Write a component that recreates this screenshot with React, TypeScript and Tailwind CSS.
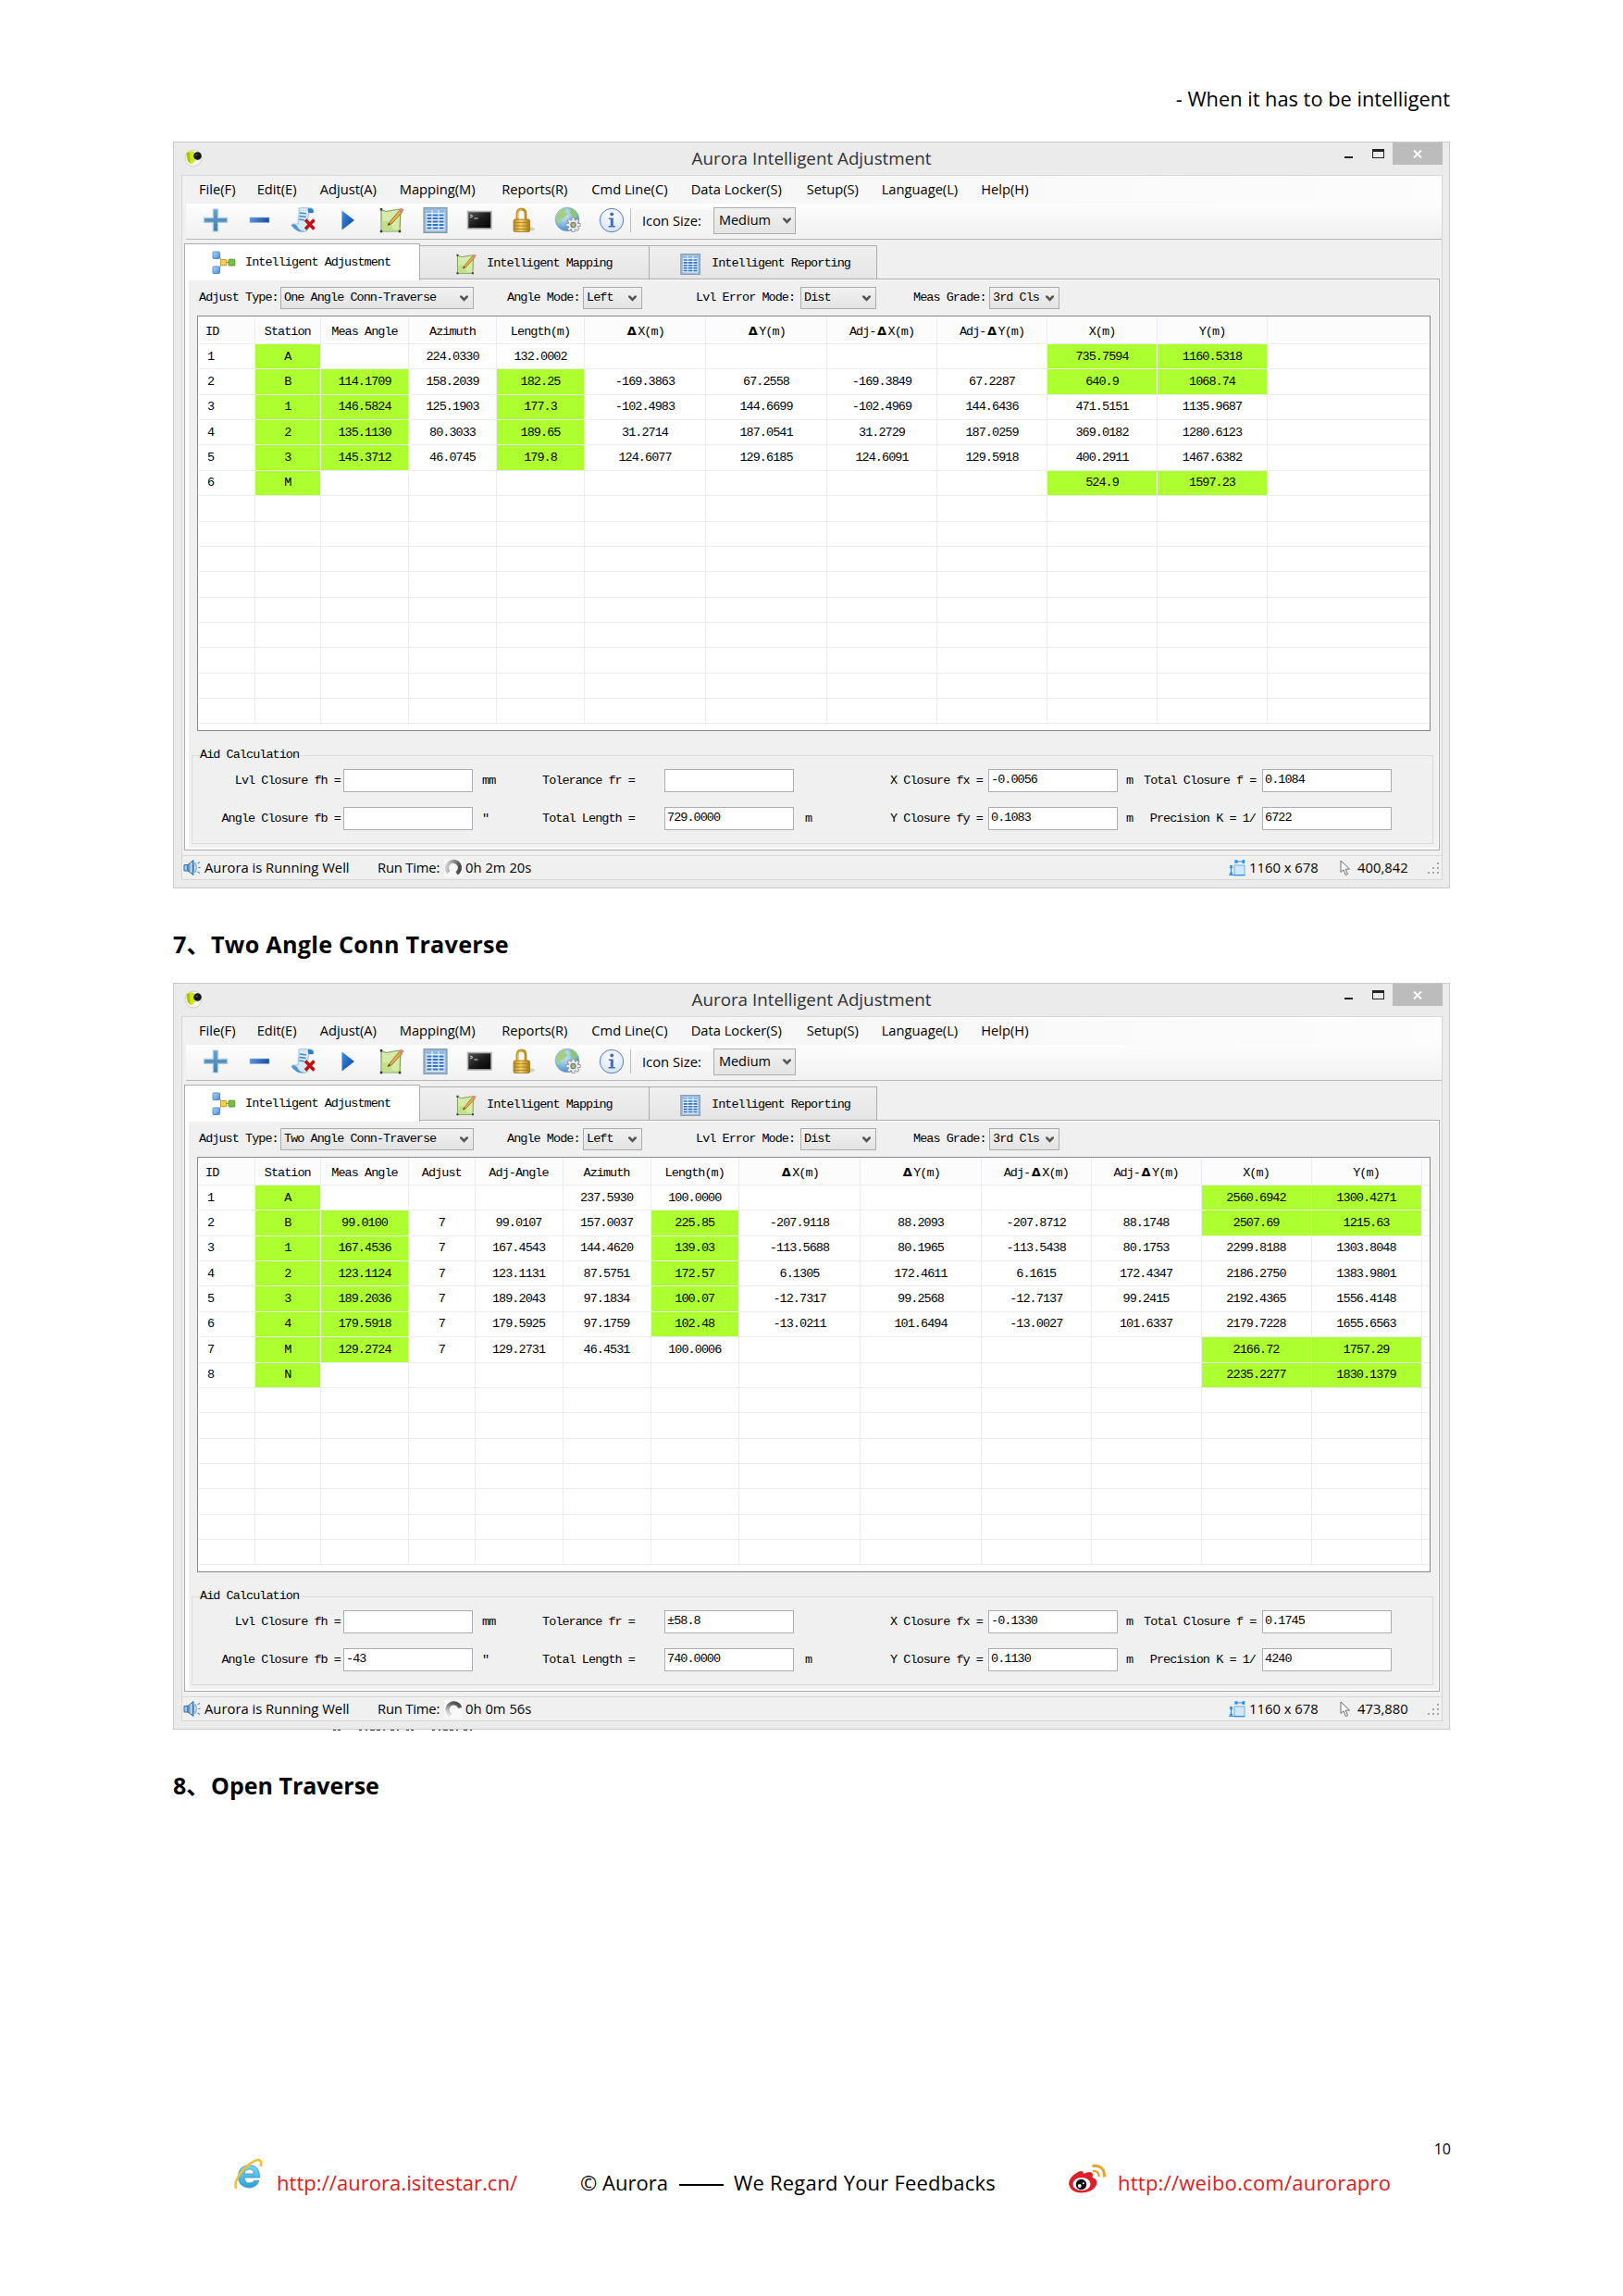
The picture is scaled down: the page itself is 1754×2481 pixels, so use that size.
import type { ReactNode } from "react";

const SANS = "font-['Open_Sans','Noto_Sans_CJK_SC',sans-serif]";
const MONO = "font-['Liberation_Mono',monospace] text-[13.500px] tracking-[-0.960px] whitespace-pre";

/* ---------- icons ---------- */

function Defs() {
  return (
    <svg width="0" height="0" className="absolute">
      <defs>
        <linearGradient id="plusG" x1="0" y1="0" x2="0" y2="1">
          <stop offset="0" stopColor="#6fa3c9" />
          <stop offset="1" stopColor="#3f7db0" />
        </linearGradient>
        <linearGradient id="minusG" x1="0" y1="0" x2="1" y2="0">
          <stop offset="0" stopColor="#5b90d8" />
          <stop offset="1" stopColor="#1d4c9e" />
        </linearGradient>
        <linearGradient id="playG" x1="0" y1="0" x2="1" y2="1">
          <stop offset="0" stopColor="#3f8ee6" />
          <stop offset="1" stopColor="#0a3f9a" />
        </linearGradient>
        <linearGradient id="goldG" x1="0" y1="0" x2="1" y2="0">
          <stop offset="0" stopColor="#b98a1c" />
          <stop offset="0.45" stopColor="#f3d265" />
          <stop offset="1" stopColor="#a87812" />
        </linearGradient>
        <radialGradient id="globeG" cx="0.35" cy="0.3" r="0.8">
          <stop offset="0" stopColor="#d7eefb" />
          <stop offset="0.55" stopColor="#7fb8e2" />
          <stop offset="1" stopColor="#3b7fbb" />
        </radialGradient>
        <radialGradient id="infoG" cx="0.5" cy="0.3" r="0.7">
          <stop offset="0" stopColor="#ffffff" />
          <stop offset="1" stopColor="#d5e4fa" />
        </radialGradient>
        <linearGradient id="blueNode" x1="0" y1="0" x2="1" y2="1">
          <stop offset="0" stopColor="#b9dcfb" />
          <stop offset="1" stopColor="#3f86d8" />
        </linearGradient>
        <linearGradient id="ieG" x1="0" y1="0" x2="0" y2="1">
          <stop offset="0" stopColor="#7fd6f7" />
          <stop offset="1" stopColor="#2b9fd9" />
        </linearGradient>
        <linearGradient id="termG" x1="0" y1="0" x2="1" y2="1">
          <stop offset="0" stopColor="#5a5a5a" />
          <stop offset="0.5" stopColor="#1c1c1c" />
          <stop offset="1" stopColor="#000000" />
        </linearGradient>
        <linearGradient id="spinRight" x1="0" y1="0.3" x2="1" y2="0.5">
          <stop offset="0" stopColor="#cfcfcf" />
          <stop offset="1" stopColor="#4a4a4a" />
        </linearGradient>
        <linearGradient id="spinTop" x1="0.8" y1="0" x2="0.2" y2="1">
          <stop offset="0" stopColor="#4a4a4a" />
          <stop offset="0.4" stopColor="#7d7d7d" />
          <stop offset="1" stopColor="#e4e4e4" />
        </linearGradient>
      </defs>
    </svg>
  );
}

function AppIcon() {
  return (
    <svg width="20" height="20" viewBox="0 0 20 20">
      <circle cx="10" cy="10" r="9" fill="#f4f4ee" stroke="#c9c9c0" strokeWidth="0.8" />
      <path d="M2.500 4 Q6 1 11 3 L11 9 Q13 10 12 13 Q10 16.500 6.500 16 Q2 13 2.500 4Z" fill="#cfe61e" />
      <path d="M2.500 4 L6 4 L6.500 15 L4 13Z" fill="#a7c413" />
      <circle cx="14.500" cy="7.500" r="4.300" fill="#161616" />
      <circle cx="13.500" cy="6.500" r="1.100" fill="#5c5c5c" />
      <circle cx="12" cy="14.500" r="1.700" fill="#ffffff" />
    </svg>
  );
}

function PlusIcon() {
  return (
    <svg width="28" height="28" viewBox="0 0 28 28">
      <path d="M11.300 2h5.200v9.300h10v5h-10v9.700h-5.200v-9.700H1.500v-5h9.800z" fill="url(#plusG)" stroke="#a9cfe8" strokeWidth="1.200" />
    </svg>
  );
}

function MinusIcon() {
  return (
    <svg width="28" height="28" viewBox="0 0 28 28">
      <rect x="4" y="11" width="21" height="5.500" fill="url(#minusG)" stroke="#8fb4e6" strokeWidth="0.600" />
    </svg>
  );
}

function ScrollDeleteIcon() {
  return (
    <svg width="30" height="30" viewBox="0 0 30 30">
      <path d="M10 2 Q12 1 24 2 Q27 3 25 7 L21 7 Q19 12 20 19 Q22 24 18 27 Q8 28 2 21 Q2 18 6 19 L9 19 Q9 14 10 8Z" fill="#d5e8f8" stroke="#8db6da" strokeWidth="0.800" />
      <path d="M20 2 Q27 2 25.500 7 L20.500 7 Q19 4 20 2Z" fill="#2f7fc4" />
      <path d="M11 7l7 .8M10.500 10.500l7 1M10.300 14l5.500 .8" stroke="#3f86c6" strokeWidth="1.300" />
      <path d="M2 20 Q5 18 8 21 Q10 26 16 27.500 Q7 28.500 2 20Z" fill="#4f97d3" />
      <path d="M17 14.500 L26.500 24.500 M26.500 14.500 L17 24.500" stroke="#c40d12" strokeWidth="3.400" />
    </svg>
  );
}

function PlayIcon() {
  return (
    <svg width="28" height="28" viewBox="0 0 28 28">
      <path d="M7.500 3.500 L21 14 L7.500 24.500Z" fill="url(#playG)" />
    </svg>
  );
}

function MapIcon({ size }: { size: number }) {
  return (
    <svg width={size} height={size} viewBox="0 0 28 28">
      <path d="M3 2.500 L8 4.500 L20 2.500 L24 2 L23 26 L3 26Z" fill="#d6eba9" stroke="#7f9c5a" strokeWidth="1.200" />
      <path d="M3.500 16 Q11 12 14 20 T23 22 L23 25.500 L3.500 25.500Z" fill="#c2e08c" />
      <path d="M10 19.500 L12 16 L22.500 3.500 L25.500 5.500 L14 18Z" fill="#e0b04c" stroke="#9a6a2c" strokeWidth="0.900" />
      <path d="M22.500 3.500 L25 0.800 L27.800 2.500 L25.500 5.500Z" fill="#d98a86" />
      <path d="M10 19.500 L11.500 16.800 L13 18.300Z" fill="#4a3520" />
      <path d="M1.800 1h2.400v2.400h-2.400zM1.800 24.800h2.400v2.400h-2.400zM21.800 24.800h2.400v2.400h-2.400z" fill="#2d3b22" />
    </svg>
  );
}

function TableIcon({ size }: { size: number }) {
  return (
    <svg width={size} height={size} viewBox="0 0 28 28">
      <rect x="1" y="0.600" width="25" height="27" fill="#9fb9d0" stroke="#7690a8" strokeWidth="1" />
      <rect x="3.500" y="3" width="20" height="22" fill="#e2f0ff" />
      <rect x="3.500" y="3" width="20" height="3" fill="#8bb9ec" />
      <path d="M4.500 8.500h18M4.500 12h18M4.500 15.500h18M4.500 19h18M4.500 22.500h18" stroke="#2f6fc4" strokeWidth="1.900" />
      <path d="M10 3v22M17 3v22" stroke="#eaf4ff" strokeWidth="1.200" />
    </svg>
  );
}

function TerminalIcon() {
  return (
    <svg width="28" height="28" viewBox="0 0 28 28">
      <rect x="1.500" y="4.500" width="25.500" height="18.500" fill="url(#termG)" stroke="#b4b4b4" strokeWidth="1.600" />
      <path d="M4 8l3 1.500l-3 1.500M8.500 12h4" stroke="#dddddd" strokeWidth="1" fill="none" />
    </svg>
  );
}

function LockIcon() {
  return (
    <svg width="28" height="28" viewBox="0 0 28 28">
      <ellipse cx="19" cy="23.500" rx="7" ry="2.500" fill="#d4d0c8" />
      <path d="M7 14 V7 Q7 2 11.500 2 Q16 2 16 7 V14" fill="none" stroke="#c09024" strokeWidth="2.800" />
      <path d="M7.500 13 V7 Q7.500 2.500 11.500 2.500" fill="none" stroke="#eed37a" strokeWidth="0.800" />
      <rect x="3" y="13" width="17.500" height="13.500" rx="1.500" fill="url(#goldG)" stroke="#9a6f14" strokeWidth="0.700" />
      <path d="M3.500 16.500h16.500M3.500 20h16.500M3.500 23.500h16.500" stroke="#a87a1a" strokeWidth="0.800" />
    </svg>
  );
}

function GlobeIcon() {
  const teeth = [0, 45, 90, 135];
  return (
    <svg width="30" height="30" viewBox="0 0 30 30">
      <circle cx="14" cy="14" r="12.800" fill="url(#globeG)" stroke="#7aa6c8" strokeWidth="0.700" />
      <path d="M3 9 Q7 2 13 2 L12 6 L15 8 L10 13 L6 14 L7 18 L3 18 Q1 13 3 9Z" fill="#a2cf83" />
      <path d="M17 2 Q24 4 26 10 L22 13 L18 9Z" fill="#8fc672" />
      <g stroke="#8b8b8b" strokeWidth="4">
        {teeth.map((a) => (
          <path key={a} d="M12.500 20 H28.500" transform={`rotate(${a} 20.500 20)`} />
        ))}
      </g>
      <g stroke="#ededed" strokeWidth="2.400">
        {teeth.map((a) => (
          <path key={a} d="M13.200 20 H27.800" transform={`rotate(${a} 20.500 20)`} />
        ))}
      </g>
      <circle cx="20.500" cy="20" r="5" fill="#ededed" />
      <circle cx="20.500" cy="20" r="2.600" fill="#9cc08a" stroke="#7c7c7c" strokeWidth="1.200" />
    </svg>
  );
}

function InfoIcon() {
  return (
    <svg width="28" height="28" viewBox="0 0 28 28">
      <circle cx="14" cy="14" r="12.700" fill="url(#infoG)" stroke="#5d7fbf" strokeWidth="1" />
      <circle cx="14.200" cy="7.500" r="2" fill="#4a6cb8" />
      <path d="M10.800 11.500h5v8.500h2v1.600h-7.200V20h2.200v-6.900h-2z" fill="#4a6cb8" />
    </svg>
  );
}

function NodesIcon() {
  return (
    <svg width="26" height="26" viewBox="0 0 26 26">
      <path d="M7 5 L12 12.500 L7 20M11 12.500h8" stroke="#8a8a8a" strokeWidth="1" fill="none" />
      <rect x="1" y="1" width="7.500" height="7.500" rx="1" fill="url(#blueNode)" stroke="#4a83bd" strokeWidth="0.900" />
      <rect x="1" y="17" width="7.500" height="7.500" rx="1" fill="url(#blueNode)" stroke="#4a83bd" strokeWidth="0.900" />
      <rect x="9.500" y="9.500" width="6.200" height="6.200" rx="0.800" fill="#f5d24a" stroke="#b58f1c" strokeWidth="0.900" />
      <rect x="18" y="9.200" width="6.800" height="6.800" rx="0.800" fill="#7cc242" stroke="#4f8a24" strokeWidth="0.900" />
    </svg>
  );
}

function SpeakerIcon() {
  return (
    <svg width="19" height="19" viewBox="0 0 19 19">
      <path d="M1 6.500h4v6.500H1z" fill="#9cc6ee" stroke="#2f6db0" strokeWidth="1" />
      <path d="M5 6.500 L11 1.500 V17.500 L5 13Z" fill="#6ba7e2" stroke="#2f6db0" strokeWidth="1" />
      <path d="M8.500 4v11" stroke="#d8ebfb" strokeWidth="1.200" />
      <ellipse cx="12.800" cy="9.500" rx="1.300" ry="5" fill="none" stroke="#4d8fd0" strokeWidth="1" />
      <path d="M15.500 5l2.500-1.500M16 9.500h2.500M15.500 14l2.500 1.500" stroke="#4d8fd0" strokeWidth="1.100" />
    </svg>
  );
}

function SpinnerIcon({ turned }: { turned: boolean }) {
  return (
    <svg width="20" height="20" viewBox="0 0 20 20" className="bg-[#f8f8f8]">
      {turned ? (
        <path d="M7 16.500 A7 7 0 1 1 17.200 8.500" fill="none" stroke="url(#spinTop)" strokeWidth="4.200" />
      ) : (
        <path d="M4.800 14.500 A7 7 0 1 1 13.500 15.800" fill="none" stroke="url(#spinRight)" strokeWidth="4.200" />
      )}
    </svg>
  );
}

function ResizeIcon() {
  return (
    <svg width="18" height="19" viewBox="0 0 18 19">
      <rect x="6" y="7" width="11" height="11" fill="#d3e9fb" stroke="#63aee8" strokeWidth="1" />
      <path d="M0 17.500h17M7 1v4M16.500 1v4M7.500 3h9M9.500 1.500L7.500 3l2 1.500M14.500 1.500l2 1.500l-2 1.500M1 7.500h3M2.500 8v9M1 10l1.500-2L4 10M1 15l1.500 2L4 15" stroke="#2a8de0" strokeWidth="1.200" fill="none" />
    </svg>
  );
}

function CursorIcon() {
  return (
    <svg width="12" height="18" viewBox="0 0 12 18">
      <path d="M1 1 V13.500 L4 10.800 L6.300 16.500 L8.500 15.600 L6.200 10.200 L10.500 10Z" fill="#ffffff" stroke="#6b6b6b" strokeWidth="1" />
    </svg>
  );
}

function Grip() {
  return (
    <svg width="14" height="14" viewBox="0 0 14 14" fill="#a6a6a6">
      <path d="M11 1h2v2h-2zM11 6h2v2h-2zM6 6h2v2h-2zM11 11h2v2h-2zM6 11h2v2h-2zM1 11h2v2h-2z" />
    </svg>
  );
}

function Chevron() {
  return (
    <svg width="9" height="7" viewBox="0 0 9 7" className="shrink-0">
      <path d="M0 0.500 H2.200 L4.500 3 L6.800 0.500 H9 V2 L4.500 6.800 L0 2Z" fill="#555555" />
    </svg>
  );
}

/* ---------- window ---------- */

type Row = string[];

type WindowData = {
  adjustType: string;
  cols: string;
  headers: string[];
  rows: Row[];
  green: Record<number, number[]>;
  values: [string, string, string, string, string, string, string, string];
  time: string;
  pointer: string;
  turned: boolean;
};

const COMBO = "flex items-center justify-between border border-[#acacac] bg-linear-to-b from-[#f1f1f1] to-[#e4e4e4]";

function Combo({ width, children }: { width: string; children: string }) {
  return (
    <div className={`${COMBO} ${MONO} ${width} h-6 pr-[5px] pl-[3px]`}>
      <span>{children}</span>
      <Chevron />
    </div>
  );
}

function Tab({ icon, label, className }: { icon: ReactNode; label: string; className: string }) {
  return (
    <div className={`flex items-center border border-[#acacac] ${className}`}>
      {icon}
      <span className={MONO}>{label}</span>
    </div>
  );
}

function DataTable({ data }: { data: WindowData }) {
  const count = data.headers.length;
  return (
    <div className={`${MONO} ml-[9px] h-[449px] w-[1333px] overflow-hidden border-[1.5px] border-[#828790] bg-white pl-px`}>
      <div className={`grid h-[30px] border-b border-[#ececec] bg-[#fcfcfd] ${data.cols}`}>
        {data.headers.map((h, i) => (
          <div key={h} className={`flex items-center border-r border-[#e9eef5] pt-[5px] ${i === 0 ? "pl-[7px]" : "justify-center"}`}>
            {h.includes("Δ") ? (
              <span>
                {h.split("Δ")[0]}
                <span className="inline-block w-[13px] text-center font-['DejaVu_Sans'] text-[13px] leading-none font-bold tracking-normal">Δ</span>
                {h.split("Δ")[1]}
              </span>
            ) : (
              <span>{h}</span>
            )}
          </div>
        ))}
      </div>
      {Array.from({ length: 15 }, (_, r) => (
        <div key={r} className={`grid h-[27.370px] border-b border-[#ececec] ${data.cols}`}>
          {Array.from({ length: count }, (_, c) => (
            <div
              key={c}
              className={`flex items-center border-r border-[#ececec] pt-px ${c === 0 ? "pl-[9px]" : "justify-center"} ${
                data.green[r]?.includes(c) ? "bg-[#adff2f]" : ""
              }`}
            >
              {data.rows[r]?.[c] ?? ""}
            </div>
          ))}
        </div>
      ))}
    </div>
  );
}

function Field({ value }: { value: string }) {
  return <div className="flex h-[25px] w-[140px] items-center border border-[#abadb3] bg-white pb-px pl-[2px]">{value}</div>;
}

function AidRow({ labels, units, values, className }: { labels: string[]; units: string[]; values: string[]; className: string }) {
  return (
    <div className={`grid grid-cols-[163px_140px_72px_135px_140px_103px_107px_140px_28px_128px_140px] items-center ${className}`}>
      <span className="pr-[3px] text-right">{labels[0]}</span>
      <Field value={values[0]} />
      <span className="pl-[10px]">{units[0]}</span>
      <span className="pl-[3px]">{labels[1]}</span>
      <Field value={values[1]} />
      <span className="pl-[12px]">{units[1]}</span>
      <span className="pr-[6px] text-right">{labels[2]}</span>
      <Field value={values[2]} />
      <span className="pl-[9px]">{units[2]}</span>
      <span className="pr-[7px] text-right">{labels[3]}</span>
      <Field value={values[3]} />
    </div>
  );
}

function AppWindow({ data }: { data: WindowData }) {
  const v = data.values;
  return (
    <section className={`h-[807px] w-[1380px] border border-[#cbcbcb] bg-[#ebebeb] text-black ${SANS}`}>
      <header className="flex h-[35px]">
        <div className="w-[240px] pt-[7px] pl-[11px]">
          <AppIcon />
        </div>
        <h1 className="flex-1 pt-[4px] text-center text-[18.800px] leading-[26px] text-[#333333]">Aurora Intelligent Adjustment</h1>
        <div className="flex w-[240px] justify-end pr-[7px]">
          <div className="mt-[15px] mr-[21px] h-[2px] w-[9px] bg-[#222222]" />
          <div className="mt-[7px] mr-[9px] h-[10px] w-[13px] border-[1.500px] border-t-[3px] border-[#222222]" />
          <div className="flex h-6 w-[54px] items-center justify-center bg-[#bcbcbc]">
            <svg width="10" height="9" viewBox="0 0 10 9">
              <path d="M1 0.500 L9 8.500 M9 0.500 L1 8.500" stroke="#ffffff" strokeWidth="1.900" />
            </svg>
          </div>
        </div>
      </header>

      <div className="ml-[8px] h-[762px] w-[1363px] border border-[#d8d8d8] bg-[#f0f0f0]">
        <nav className="grid h-[30px] grid-cols-[62.700px_68px_86px_110.600px_97px_107.400px_125px_81px_107.600px_1fr] items-center bg-linear-to-r from-[#f1f1f1] to-[#fdfdfd] pb-[2px] pl-[18px] text-[14.700px] leading-none">
          {["File(F)", "Edit(E)", "Adjust(A)", "Mapping(M)", "Reports(R)", "Cmd Line(C)", "Data Locker(S)", "Setup(S)", "Language(L)", "Help(H)"].map((m) => (
            <span key={m}>{m}</span>
          ))}
        </nav>

        <div className="ml-1 flex h-[39px] items-center border-b border-[#b8b8b8] bg-linear-to-b from-[#fdfdfd] to-[#f1f1f1] pb-[2px] pl-2">
          <div className="grid grid-cols-[repeat(10,47.600px)] place-items-center [&>svg]:block">
            <PlusIcon />
            <MinusIcon />
            <ScrollDeleteIcon />
            <PlayIcon />
            <MapIcon size={28} />
            <TableIcon size={28} />
            <TerminalIcon />
            <LockIcon />
            <GlobeIcon />
            <InfoIcon />
          </div>
          <div className="-ml-[4px] h-[26px] w-px bg-[#bdbdbd]" />
          <div className="ml-[5px] flex h-[22px] w-[84px] items-center bg-[#f5f5f5] pl-[7px] text-[14.800px] leading-none whitespace-nowrap">
            Icon Size:
          </div>
          <div className={`${COMBO} h-[29px] w-[89px] pr-1 pl-[5px] text-[14.500px]`}>
            <span>Medium</span>
            <Chevron />
          </div>
        </div>

        <div className="ml-[2px] flex h-[42px] items-end">
          <Tab
            icon={<span className="mr-[10px]"><NodesIcon /></span>}
            label="Intelligent Adjustment"
            className="relative z-10 -mb-[2px] h-[40px] w-[255px] border-b-0 bg-white pt-px pl-[29px]"
          />
          <Tab
            icon={<span className="mr-[11px]"><MapIcon size={23} /></span>}
            label="Intelligent Mapping"
            className="h-[36px] w-[248px] border-b-0 border-l-0 bg-linear-to-b from-[#f0f0f0] to-[#e5e5e5] pt-[4px] pl-[38px]"
          />
          <Tab
            icon={<span className="mr-[11px]"><TableIcon size={23} /></span>}
            label="Intelligent Reporting"
            className="h-[36px] w-[246px] border-b-0 border-l-0 bg-linear-to-b from-[#f0f0f0] to-[#e5e5e5] pt-[4px] pl-[33px]"
          />
        </div>

        <div className="ml-[2px] h-[618px] w-[1357px] border border-[#acacac] bg-white pt-px pr-px pb-[2px] pl-1">
          <div className="h-full bg-[#f0f0f0]">
            <div className={`${MONO} flex h-[38px] items-start pt-[7px] leading-6`}>
              <span className="w-[99px] pl-[11px]">Adjust Type:</span>
              <Combo width="w-[209px]">{data.adjustType}</Combo>
              <span className="w-[118px] pl-[36px]">Angle Mode:</span>
              <Combo width="w-[64px]">Left</Combo>
              <span className="w-[171px] pl-[58px]">Lvl Error Mode:</span>
              <Combo width="w-[82px]">Dist</Combo>
              <span className="w-[122px] pl-[40px]">Meas Grade:</span>
              <Combo width="w-[76px]">3rd Cls</Combo>
            </div>

            <DataTable data={data} />

            <div className={`${MONO} relative mt-[26px] ml-[3px] h-[96px] w-[1342px] border border-[#dcdcdc] leading-none`}>
              <span className="absolute -top-[8px] left-[8px] bg-[#f0f0f0] pr-px">Aid Calculation</span>
              <AidRow
                className="mt-[14px]"
                labels={["Lvl Closure fh =", "Tolerance fr =", "X Closure fx =", "Total Closure f ="]}
                units={["mm", "", "m"]}
                values={[v[0], v[1], v[2], v[3]]}
              />
              <AidRow
                className="mt-[16px]"
                labels={["Angle Closure fb =", "Total Length =", "Y Closure fy =", "Precision K = 1/"]}
                units={["″", "m", "m"]}
                values={[v[4], v[5], v[6], v[7]]}
              />
            </div>
          </div>
        </div>

        <footer className="mt-[5px] flex h-[26px] items-center border-t border-[#d8d8d8] pr-[2px] pl-px text-[14.800px] leading-none whitespace-nowrap">
          <SpeakerIcon />
          <span className="ml-[4px] w-[187px]">Aurora is Running Well</span>
          <span className="w-[72px] tracking-[-0.200px]">Run Time:</span>
          <SpinnerIcon turned={data.turned} />
          <span className="ml-[3px] flex-1">{data.time}</span>
          <ResizeIcon />
          <span className="ml-[4px] w-[98px]">1160 x 678</span>
          <CursorIcon />
          <span className="ml-[7px] w-[75px]">{data.pointer}</span>
          <Grip />
        </footer>
      </div>
    </section>
  );
}

/* ---------- data ---------- */

const oneAngle: WindowData = {
  adjustType: "One Angle Conn-Traverse",
  cols: "grid-cols-[60.500px_71.500px_95px_95px_95px_131px_131px_119px_119px_119px_119px]",
  headers: ["ID", "Station", "Meas Angle", "Azimuth", "Length(m)", "ΔX(m)", "ΔY(m)", "Adj-ΔX(m)", "Adj-ΔY(m)", "X(m)", "Y(m)"],
  rows: [
    ["1", "A", "", "224.0330", "132.0002", "", "", "", "", "735.7594", "1160.5318"],
    ["2", "B", "114.1709", "158.2039", "182.25", "-169.3863", "67.2558", "-169.3849", "67.2287", "640.9", "1068.74"],
    ["3", "1", "146.5824", "125.1903", "177.3", "-102.4983", "144.6699", "-102.4969", "144.6436", "471.5151", "1135.9687"],
    ["4", "2", "135.1130", "80.3033", "189.65", "31.2714", "187.0541", "31.2729", "187.0259", "369.0182", "1280.6123"],
    ["5", "3", "145.3712", "46.0745", "179.8", "124.6077", "129.6185", "124.6091", "129.5918", "400.2911", "1467.6382"],
    ["6", "M", "", "", "", "", "", "", "", "524.9", "1597.23"],
  ],
  green: { 0: [1, 9, 10], 1: [1, 2, 4, 9, 10], 2: [1, 2, 4], 3: [1, 2, 4], 4: [1, 2, 4], 5: [1, 9, 10] },
  values: ["", "", "-0.0056", "0.1084", "", "729.0000", "0.1083", "6722"],
  time: "0h 2m 20s",
  pointer: "400,842",
  turned: false,
};

const twoAngle: WindowData = {
  adjustType: "Two Angle Conn-Traverse",
  cols: "grid-cols-[60.500px_71.500px_95px_71.500px_95px_95px_95.500px_131px_131px_118.500px_119px_119px_119px]",
  headers: ["ID", "Station", "Meas Angle", "Adjust", "Adj-Angle", "Azimuth", "Length(m)", "ΔX(m)", "ΔY(m)", "Adj-ΔX(m)", "Adj-ΔY(m)", "X(m)", "Y(m)"],
  rows: [
    ["1", "A", "", "", "", "237.5930", "100.0000", "", "", "", "", "2560.6942", "1300.4271"],
    ["2", "B", "99.0100", "7", "99.0107", "157.0037", "225.85", "-207.9118", "88.2093", "-207.8712", "88.1748", "2507.69", "1215.63"],
    ["3", "1", "167.4536", "7", "167.4543", "144.4620", "139.03", "-113.5688", "80.1965", "-113.5438", "80.1753", "2299.8188", "1303.8048"],
    ["4", "2", "123.1124", "7", "123.1131", "87.5751", "172.57", "6.1305", "172.4611", "6.1615", "172.4347", "2186.2750", "1383.9801"],
    ["5", "3", "189.2036", "7", "189.2043", "97.1834", "100.07", "-12.7317", "99.2568", "-12.7137", "99.2415", "2192.4365", "1556.4148"],
    ["6", "4", "179.5918", "7", "179.5925", "97.1759", "102.48", "-13.0211", "101.6494", "-13.0027", "101.6337", "2179.7228", "1655.6563"],
    ["7", "M", "129.2724", "7", "129.2731", "46.4531", "100.0006", "", "", "", "", "2166.72", "1757.29"],
    ["8", "N", "", "", "", "", "", "", "", "", "", "2235.2277", "1830.1379"],
  ],
  green: {
    0: [1, 11, 12],
    1: [1, 2, 6, 11, 12],
    2: [1, 2, 6],
    3: [1, 2, 6],
    4: [1, 2, 6],
    5: [1, 2, 6],
    6: [1, 2, 11, 12],
    7: [1, 11, 12],
  },
  values: ["", "±58.8", "-0.1330", "0.1745", "-43", "740.0000", "0.1130", "4240"],
  time: "0h 0m 56s",
  pointer: "473,880",
  turned: true,
};

/* ---------- page ---------- */

function IeLogo() {
  return (
    <svg width="32" height="36" viewBox="0 0 32 36">
      <path d="M27.500 21 H11 Q11.500 27 16.500 27 Q20 27 21.500 24.500 H27 Q24 32 16 32 Q4.500 31 4.500 19.500 Q5 8 16.500 7.500 Q28 8 27.500 21Z M11 17 H21.500 Q21 12 16.300 12 Q11.500 12.500 11 17Z" fill="url(#ieG)" fillRule="evenodd" stroke="#1f8ac4" strokeWidth="0.700" />
      <path d="M2.500 33 Q-1 27 7.500 15.500 Q17 4 25 2 Q31 1.500 28.500 9" fill="none" stroke="#f3c12f" strokeWidth="2.600" />
    </svg>
  );
}

function WeiboLogo() {
  return (
    <svg width="42" height="32" viewBox="0 0 42 32">
      <path d="M1 20 Q2 13 11 8 Q17 5 17 10 Q25 6 27 10 L26.500 14 Q33 16 31 22 Q27 30 15 30.500 Q2 30 1 20Z" fill="#dc2029" />
      <ellipse cx="15" cy="21" rx="9.500" ry="7" fill="#ffffff" />
      <circle cx="14.500" cy="21.500" r="5.700" fill="#111111" />
      <circle cx="12.800" cy="23" r="1.900" fill="#ffffff" />
      <circle cx="16.800" cy="20.200" r="1" fill="#ffffff" />
      <path d="M26.500 1.500 Q40 0 39.500 13.500" fill="none" stroke="#e8a020" strokeWidth="2.800" />
      <path d="M27 7 Q34 6.500 33.500 13" fill="none" stroke="#e8a020" strokeWidth="2.300" />
    </svg>
  );
}

/* Sliver of a covered line that peeks out under the second window. */
function CoveredLine() {
  return (
    <svg width="150" height="3" viewBox="0 0 150 3" className="absolute bottom-[-2px] left-[173px]">
      <path d="M0 1.500H150" stroke="#333333" strokeWidth="1.200" strokeDasharray="3 2 3 20 3 4 2 3 5 2 4 3 2 6 4 3 2 8" />
    </svg>
  );
}

export default function App() {
  return (
    <main className={`h-[2481px] w-[1754px] overflow-hidden bg-white text-black ${SANS}`}>
      <Defs />
      <div className="flex h-[153px] justify-end pt-[91px] pr-[187px] text-[21.800px] leading-[31px]">- When it has to be intelligent</div>
      <div className="ml-[187px] w-[1381px]">
        <AppWindow data={oneAngle} />
        <h2 className="flex h-[102px] items-center pt-[19px] text-[25.200px] leading-none font-bold">
          <span className="w-[41px]">7、</span>
          <span className="tracking-[0.250px]">Two Angle Conn Traverse</span>
        </h2>
        <div className="relative">
          <AppWindow data={twoAngle} />
          <CoveredLine />
        </div>
        <h2 className="flex h-[102px] items-center pt-[19px] text-[25px] leading-none font-bold">
          <span className="w-[41px]">8、</span>
          <span>Open Traverse</span>
        </h2>
        <div className="flex h-[361px] items-end justify-end text-[16px] leading-5">10</div>
        <div className="flex h-[46px] items-end pl-[66px] text-[22px] leading-[30px] whitespace-nowrap">
          <span className="mb-[10px]"><IeLogo /></span>
          <span className="mb-[5px] ml-[14px] w-[328px] tracking-[0.050px] text-[#e01a1a]">http://aurora.isitestar.cn/</span>
          <span className="mb-[5px] w-[107px]">© Aurora</span>
          <span className="mb-[16px] h-[2px] w-[48px] bg-black" />
          <span className="mb-[5px] ml-[11px] w-[361px] tracking-[0.200px]">We Regard Your Feedbacks</span>
          <span className="mb-[7px]"><WeiboLogo /></span>
          <span className="mb-[5px] ml-[12px] tracking-[0.240px] text-[#e01a1a]">http://weibo.com/aurorapro</span>
        </div>
      </div>
    </main>
  );
}
